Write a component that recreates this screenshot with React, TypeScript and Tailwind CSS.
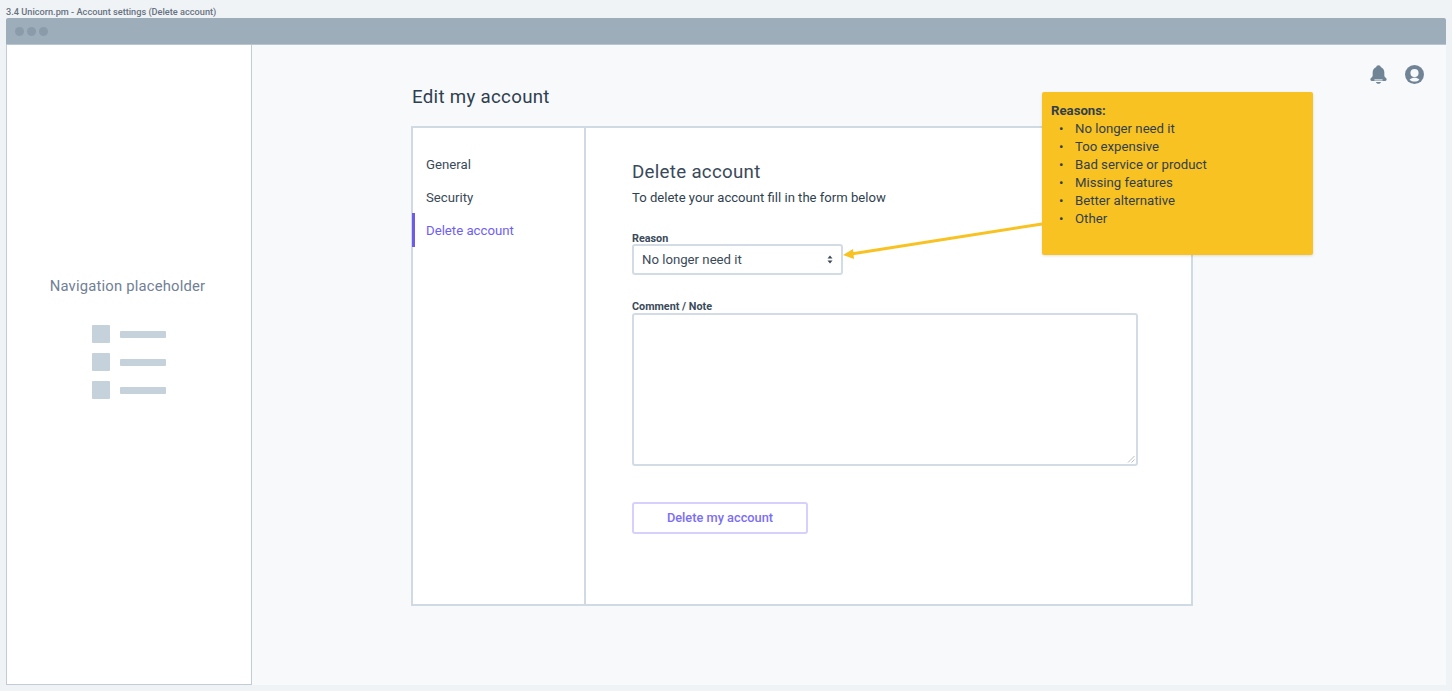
const reasons = [
  "No longer need it",
  "Too expensive",
  "Bad service or product",
  "Missing features",
  "Better alternative",
  "Other",
];

const SidebarRow = () => (
  <div className="flex items-center gap-[10px]">
    <div className="w-[18px] h-[18px] bg-[#c5d1db] rounded-[1px]" />
    <div className="w-[46px] h-[7px] bg-[#c5d1db] rounded-[1px]" />
  </div>
);

const Bell = () => (
  <svg width="21" height="21" viewBox="0 0 18 18" className="text-[#718496]">
    <path
      fill="currentColor"
      d="M9 1C7.900 1 7.200 1.700 7.100 2.500 5 3.300 4 5 4 7.300v2.500c0 1-0.700 1.500-1.600 2.400-0.800 0.900-0.300 2.300 1 2.300h11.200c1.300 0 1.800-1.400 1-2.300-0.900-0.900-1.600-1.400-1.600-2.400V7.300c0-2.300-1-4-3.100-4.800C10.800 1.700 10.100 1 9 1z"
    />
    <path fill="#f7f9fb" d="M5.500 13.200h7v0.900h-7z" />
    <path fill="currentColor" d="M6.800 15.400h4.400c-0.300 1-1.200 1.600-2.200 1.600s-1.900-0.600-2.200-1.600z" />
  </svg>
);

const Avatar = () => (
  <svg width="19" height="19" viewBox="0 0 20 20">
    <circle cx="10" cy="10" r="10" fill="#718496" />
    <circle cx="10" cy="8.500" r="4.300" fill="#f7f9fb" />
    <path d="M4.800 15.400c1.400-1.400 3.200-2 5.200-2s3.800 0.600 5.200 2c-1.400 1.400-3.200 2-5.200 2s-3.800-0.600-5.200-2z" fill="#f7f9fb" />
  </svg>
);

export default function App() {
  return (
    <div className="h-screen overflow-hidden bg-[#f0f3f6] px-[6px] font-['Roboto',sans-serif] text-[#2f3f4f] flex flex-col">
      <div className="h-[18px] pt-[6px] text-[9.2px] leading-[11px] font-medium text-[#66727f] whitespace-nowrap">
        3.4 Unicorn.pm - Account settings (Delete account)
      </div>
      <div className="h-[667px] flex flex-col bg-[#f7f9fb]">
        <div className="h-[27px] shrink-0 bg-[#9eadba] border-b border-[#b9c6d1] flex items-center gap-[3px] pl-[9px] rounded-t-[2px]">
          <span className="w-[9px] h-[9px] rounded-full bg-[#8b9baa]" />
          <span className="w-[9px] h-[9px] rounded-full bg-[#8b9baa]" />
          <span className="w-[9px] h-[9px] rounded-full bg-[#8b9baa]" />
        </div>
        <div className="flex-1 flex min-h-0">
          <aside className="w-[246px] shrink-0 bg-white border-r border-b border-l border-[#c1ccd6] flex flex-col items-center pt-[231px]">
            <div className="text-[14.8px] leading-[20px] text-[#718096] tracking-[0.2px] -ml-[3px]">Navigation placeholder</div>
            <div className="mt-[29px] flex flex-col gap-[10px] items-start -ml-[1px]">
              <SidebarRow />
              <SidebarRow />
              <SidebarRow />
            </div>
          </aside>
          <main className="relative flex-1 pl-[159px]">
            <div className="absolute top-[19px] right-[22px] flex items-center gap-[16px]">
              <Bell />
              <Avatar />
            </div>
            <h1 className="pt-[40px] pl-px text-[18.7px] leading-[24px] font-normal text-[#2f3f4f] tracking-[0.3px]">Edit my account</h1>
            <div className="mt-[17px] w-[782px] h-[480px] flex bg-white border-2 border-[#d0dae2]">
              <nav className="w-[173px] shrink-0 border-r-2 border-[#d0dae2] pt-[20px] text-[13.2px] leading-[33px]">
                <div className="pl-[13px] text-[#3a4a5a]">General</div>
                <div className="pl-[13px] text-[#3a4a5a]">Security</div>
                <div className="h-[34px] -mt-[1px] -ml-[1px] pl-[11px] border-l-[3px] border-[#6c5ce7] text-[#6e5ef5] leading-[35px]">Delete account</div>
              </nav>
              <section className="flex-1 pl-[46px] pt-[32px]">
                <h2 className="text-[18.7px] leading-[24px] font-normal tracking-[0.3px] text-[#3a4a5a]">Delete account</h2>
                <p className="mt-[4px] text-[13.1px] leading-[20px] text-[#2f3f4f]">To delete your account fill in the form below</p>
                <label className="block mt-[25px] text-[10.8px] leading-[12px] font-bold text-[#3a4a5a]">Reason</label>
                <div className="-mt-px w-[211px] h-[31px] flex items-center justify-between pl-[8px] pr-[8px] bg-white border-2 border-[#d3dce4] rounded-[3px] text-[13.2px] text-[#3a4a5a]">
                  <span>No longer need it</span>
                  <svg width="6" height="9" viewBox="0 0 6 9" className="text-[#3a4a5a]">
                    <path d="M3 0.500 5.500 3.500H0.500zM3 8.500 0.500 5.500H5.500z" fill="currentColor" />
                  </svg>
                </div>
                <label className="block mt-[26px] text-[10.8px] leading-[12px] font-bold text-[#3a4a5a]">Comment / Note</label>
                <div className="relative w-[506px] h-[153px] bg-white border-2 border-[#d3dce4] rounded-[3px]">
                  <svg width="8" height="8" viewBox="0 0 8 8" className="absolute right-[1px] bottom-[1px] text-[#b4bec8]">
                    <path d="M1 7.500 7.500 1M4.500 7.500 7.500 4.500" stroke="currentColor" strokeWidth="1" fill="none" />
                  </svg>
                </div>
                <button className="mt-[36px] block w-[176px] h-[32px] bg-white border-2 border-[#d6d0fd] rounded-[3px] text-[12.8px] font-medium text-[#7b6ef6]">
                  Delete my account
                </button>
              </section>
            </div>
            {/* note and arrow sit over the card */}
            <div className="absolute left-[790px] top-[47px] w-[271px] h-[163px] bg-[#f8c223] rounded-[2px] shadow-[0_1px_3px_rgba(0,0,0,0.12)] pl-[9px] pt-[10px] text-[13.2px] leading-[18px] text-[#323f4b]">
              <div className="font-bold">Reasons:</div>
              <ul className="pl-[8px]">
                {reasons.map((r) => (
                  <li key={r} className="flex">
                    <span className="w-[16px] shrink-0">•</span>
                    {r}
                  </li>
                ))}
              </ul>
            </div>
            <svg width="210" height="50" viewBox="0 0 210 50" className="absolute left-[585px] top-[170px] text-[#f8c223]">
              <path d="M14 39 205 9" stroke="currentColor" strokeWidth="3" fill="none" />
              <path d="M6 40 16 34 17 44z" fill="currentColor" />
            </svg>
          </main>
        </div>
      </div>
    </div>
  );
}
